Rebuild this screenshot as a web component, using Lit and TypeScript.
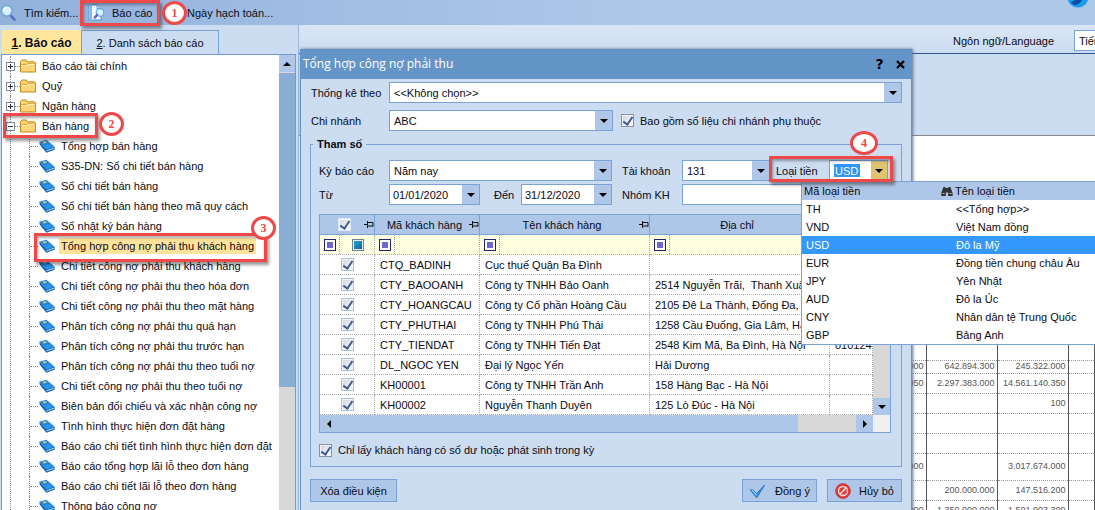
import { LitElement, html, css, svg, nothing } from "lit";
import { customElement, state } from "lit/decorators.js";
import { classMap } from "lit/directives/class-map.js";

const REPORTS = [
  "Tổng hợp bán hàng",
  "S35-DN: Sổ chi tiết bán hàng",
  "Sổ chi tiết bán hàng",
  "Sổ chi tiết bán hàng theo mã quy cách",
  "Sổ nhật ký bán hàng",
  "Tổng hợp công nợ phải thu khách hàng",
  "Chi tiết công nợ phải thu khách hàng",
  "Chi tiết công nợ phải thu theo hóa đơn",
  "Chi tiết công nợ phải thu theo mặt hàng",
  "Phân tích công nợ phải thu quá hạn",
  "Phân tích công nợ phải thu trước hạn",
  "Phân tích công nợ phải thu theo tuổi nợ",
  "Chi tiết công nợ phải thu theo tuổi nợ",
  "Biên bản đối chiếu và xác nhận công nợ",
  "Tình hình thực hiện đơn đặt hàng",
  "Báo cáo chi tiết tình hình thực hiện đơn đặt",
  "Báo cáo tổng hợp lãi lỗ theo đơn hàng",
  "Báo cáo chi tiết lãi lỗ theo đơn hàng",
  "Thông báo công nợ",
];

const CUSTOMERS = [
  ["CTQ_BADINH", "Cục thuế Quận Ba Đình", "", ""],
  ["CTY_BAOOANH", "Công ty TNHH Bảo Oanh", "2514 Nguyễn Trãi,  Thanh Xuân, Hà Nội", ""],
  ["CTY_HOANGCAU", "Công ty Cổ phần Hoàng Cầu", "2105 Đê La Thành, Đống Đa, Hà Nội", ""],
  ["CTY_PHUTHAI", "Công ty TNHH Phú Thái", "1258 Cầu Đuống, Gia Lâm, Hà Nội", ""],
  ["CTY_TIENDAT", "Công ty TNHH Tiến Đạt", "2548 Kim Mã, Ba Đình, Hà Nội", "0101243150"],
  ["DL_NGOC YEN", "Đại lý Ngọc Yến", "Hải Dương", ""],
  ["KH00001", "Công ty TNHH Trần Anh", "158 Hàng Bạc - Hà Nội", ""],
  ["KH00002", "Nguyễn Thanh Duyên", "125 Lò Đúc - Hà Nội", ""],
];

const CURRENCIES = [
  ["TH", "<<Tổng hợp>>"],
  ["VND", "Việt Nam đồng"],
  ["USD", "Đô la Mỹ"],
  ["EUR", "Đồng tiền chung châu Âu"],
  ["JPY", "Yên Nhật"],
  ["AUD", "Đô la Úc"],
  ["CNY", "Nhân dân tệ Trung Quốc"],
  ["GBP", "Bảng Anh"],
];

const FIGURES = [
  { size: "tall", cells: ["", "200.000.000", "247.730.000"] },
  { size: "short", cells: ["000", "642.894.300", "245.322.000"] },
  { size: "mid", cells: ["950", "2.297.383.000", "14.561.140.350"] },
  { size: "mid", cells: ["", "", "100"] },
  { size: "mid", cells: ["", "", ""] },
  { size: "mid", cells: ["", "", ""] },
  { size: "high", cells: ["000", "", "3.017.674.000"] },
  { size: "mid", cells: ["", "200.000.000", "147.516.200"] },
  { size: "mid", cells: ["000", "1.350.000.000", "1.501.903.309"] },
];

const searchIcon = svg`<svg width="18" height="18" viewBox="0 0 18 18" aria-hidden="true">
  <path d="M10.8 11.8l3.8 3.8" stroke="#5a6fc4" stroke-width="2.6" stroke-linecap="round"/>
  <circle cx="6.8" cy="6.8" r="5.3" fill="#d8f0ff" stroke="#62a5de" stroke-width="1.4"/>
  <path d="M3.8 6.5a3 3 0 0 1 3-3" stroke="#fff" stroke-width="1.4" fill="none"/>
</svg>`;

const reportIcon = svg`<svg width="18" height="17" viewBox="0 0 18 17" aria-hidden="true">
  <path d="M1 1h8l4 4v11H1z" fill="#f4f9ff" stroke="#4d97cf"/>
  <path d="M2 2h2v13H2z" fill="#7fbbe6"/>
  <path d="M9 1v4h4" fill="#bfe0f5" stroke="#4d97cf" stroke-width=".8"/>
  <circle cx="12" cy="8.4" r="3.8" fill="#d6f1fc" stroke="#5aa6d8" stroke-width="1.1"/>
  <path d="M9.2 10.8L6.8 13.6" stroke="#6b62b8" stroke-width="2.4" stroke-linecap="round"/>
</svg>`;

const globeIcon = svg`<svg width="22" height="22" viewBox="0 0 22 22" aria-hidden="true">
  <circle cx="11" cy="11" r="10.5" fill="#1b9bee"/>
  <path d="M4 17c3-4 8-4 12-6-1 5-4 8-9 8z" fill="#0b4fa8"/>
</svg>`;

const folderIcon = svg`<svg width="16" height="14" viewBox="0 0 16 14" aria-hidden="true">
  <path d="M.5 13V2.4L1.8 1h4.4l1.2 1.8h6.8l1.3.9V13z" fill="#fdd477" stroke="#c28a1c"/>
  <path d="M1.4 5.6h5.4l1-1.2h7" fill="none" stroke="#d99f32"/>
  <path d="M1.4 6.6h5.8l1-1.2h6.4" fill="none" stroke="#fff0b8"/>
</svg>`;

const bookIcon = svg`<svg width="16" height="14" viewBox="0 0 16 14" aria-hidden="true">
  <path d="M0.3 2.8L7.2 .8l4.6 3.8-7.4 2.8z" fill="#1f86dc"/>
  <path d="M0.3 2.8l4.1 4.6 1 2.2-1.2.4L.8 5.6z" fill="#0d559f"/>
  <path d="M3.4 3l3-.9 1.6 1.4-3.1 1z" fill="#e8c46a"/>
  <path d="M4.4 7.4l7.4-2.8 3.9 3.5v2.6l-8.3 3L3.8 9.4z" fill="#1669b8"/>
  <path d="M4.4 7l7.4-2.6 3.6 3.3-8 2.9z" fill="#2b93e8"/>
  <path d="M7.6 11.8l7.4-2.6" stroke="#d4ebfb" stroke-width=".9"/>
</svg>`;

const pinIcon = svg`<svg class="pin" width="10" height="9" viewBox="0 0 10 9" aria-hidden="true">
  <path d="M0 4.5h3.5M3.5 1v7M3.5 2.5H9v4M3.5 6H9" stroke="#111" fill="none"/>
</svg>`;

const binoculars = svg`<svg width="12" height="11" viewBox="0 0 12 11" aria-hidden="true">
  <path d="M2.4 1h2v1h3V1h2l2.2 6v3H7.2V6.6H4.8V10H.3V7z" fill="#333"/>
  <path d="M1.5 7.5h2M8.5 7.5h2" stroke="#bbb"/>
</svg>`;

const tickIcon = svg`<svg width="18" height="16" viewBox="0 0 18 16" aria-hidden="true">
  <path d="M1 6.8l3.2.2 3.2 3.8L15.6 2 7.8 14.8z" fill="#3d98e8" stroke="#1565b8" stroke-width=".8"/>
  <path d="M2.6 7.6l1.4.1 3.6 4.6" stroke="#b4dcff" fill="none"/>
</svg>`;

const banIcon = svg`<svg width="16" height="16" viewBox="0 0 16 16" aria-hidden="true">
  <circle cx="8" cy="8" r="7.4" fill="#e33a3a" stroke="#b81f22" stroke-width=".6"/>
  <circle cx="8" cy="8" r="4.5" fill="none" stroke="#fbe3e3" stroke-width="1.3"/>
  <path d="M5 11l6-6" stroke="#fbe3e3" stroke-width="1.5"/>
</svg>`;

const arrow = (dir: "down" | "up" | "left" | "right") => html`<i class=${"arrow " + dir}></i>`;

@customElement("app-root")
export class AppRoot extends LitElement {
  @state() private report = 5;
  @state() private currency = "USD";

  static styles = css`
    :host {
      display: flex;
      flex-direction: column;
      position: relative;
      height: 100vh;
      overflow: hidden;
      background: #ccdcf1;
      color: #0b0b14;
      font: 11px/14px "Liberation Sans", Arial, sans-serif;
    }
    * { box-sizing: border-box; }
    button, input, select { font: inherit; color: inherit; border-radius: 0; margin: 0; }
    button { padding: 0; border: 0; background: none; }
    svg { display: block; flex: none; }
    .arrow { display: block; width: 0; height: 0; border: 4px solid transparent; }
    .arrow.down { border-top-color: #000; border-bottom-width: 0; }
    .arrow.up { border-bottom-color: #000; border-top-width: 0; }
    .arrow.left { border-right-color: #000; border-left-width: 0; }
    .arrow.right { border-left-color: #000; border-right-width: 0; }

    .toolbar {
      display: flex;
      align-items: center;
      flex: none;
      height: 25px;
      position: relative;
      background: linear-gradient(90deg, #92b2dc, #aec8e9 60%);
    }
    .toolbar button { display: flex; align-items: center; height: 25px; }
    .tool-search { width: 80px; gap: 6px; }
    .tool-report { width: 80px; gap: 6px; }
    .toolbar .tool-report { padding-left: 8px; }
    .tool-date { margin-left: 27px; }
    .globe { position: absolute; right: 6px; top: -14px; }

    .workspace { display: flex; flex: 1; min-height: 0; }
    .side {
      display: flex;
      flex-direction: column;
      flex: none;
      width: 299px;
      padding: 5px 2px 0 1px;
      border-right: 1px solid #9db8dc;
      background: #ccdcf1;
    }
    .tabs { display: flex; flex: none; height: 24px; padding-left: 1px; }
    .tab { border: 1px solid #7aa2d4; border-bottom: 0; background: #ccdcf1; }
    .tab.on { width: 79px; background: #ffe69c; border-color: #ffe69c; font-weight: bold; font-size: 12px; }
    .tab.off { width: 138px; }
    .tree-box {
      display: flex;
      flex: 1;
      min-height: 0;
      background: #fff;
      border: 1px solid #6f9bd1;
      border-bottom: 0;
    }
    .tree { flex: 1; overflow: hidden; padding: 1px 0 0 4px; margin: 0; list-style: none; }
    .tree ul { margin: 0; padding: 0 0 0 14px; list-style: none; }
    .node { display: flex; align-items: center; height: 20px; white-space: nowrap; }
    .group { margin-left: 4px; border-left: 1px dotted #888; }
    .group .node { margin-left: -5px; }
    .group ul .node { margin-left: 4px; border-left: 1px dotted #888; }
    .expander {
      display: flex;
      flex: none;
      width: 9px;
      height: 9px;
      border: 1px solid #7c8ba1;
      background: linear-gradient(90deg, #333, #333) center / 5px 1px no-repeat, #fff;
    }
    .expander.plus {
      background: linear-gradient(#333, #333) center / 5px 1px no-repeat,
        linear-gradient(#333, #333) center / 1px 5px no-repeat, #fff;
    }
    .dots { width: 5px; border-top: 1px dotted #888; flex: none; }
    .dots.long { width: 8px; margin-right: 1px; }
    .node a { color: inherit; text-decoration: none; padding: 0 2px; }
    .node a.cat { margin-left: 4px; }
    .node a.leaf { margin-left: 4px; }
    .node a.current { background: #ffe39a; line-height: 16px; }

    .vscroll { display: flex; flex-direction: column; flex: none; width: 17px; background: #d8d8d8; }
    .vscroll button, .hscroll button {
      display: flex;
      align-items: center;
      justify-content: center;
      flex: none;
      width: 17px;
      height: 17px;
      background: #aec7e8;
    }
    .side .vscroll { width: 16px; }
    .side .vscroll button { width: 16px; }
    .side .thumb { height: 69%; background: #8aadd6; margin-top: 1px; }

    .preview { flex: 1; min-width: 0; display: flex; flex-direction: column; background: #fff; }
    .language {
      display: flex;
      align-items: center;
      justify-content: flex-end;
      flex: none;
      height: 29px;
      padding-top: 3px;
      gap: 20px;
      background: linear-gradient(#dae6f6, #ccdcf1);
      border-bottom: 1px solid #2c538c;
      overflow: hidden;
    }
    .language select {
      appearance: none;
      width: 90px;
      height: 21px;
      margin-right: -69px;
      padding: 0 4px;
      background: #fff;
      border: 1px solid #7aa2d4;
      flex: none;
    }
    .band { flex: none; height: 82px; background: #ccdcf1; border-bottom: 1px solid #888; }
    .page { flex: 1; overflow: hidden; padding-top: 180px; display: flex; justify-content: flex-end; }
    .figures { border-collapse: collapse; table-layout: fixed; width: 240px; height: 0; flex: none; }
    .figures td {
      padding: 0 2px;
      border-right: 1px solid #555;
      border-bottom: 1px dotted #999;
      text-align: right;
      color: #555;
      font-size: 9px;
      line-height: 11px;
    }
    .figures .c-a { width: 71px; }
    .figures .tall td { height: 44px; }
    .figures .short td { height: 13px; }
    .figures .mid td { height: 20px; }
    .figures .high td { height: 27px; }

    .dialog {
      position: absolute;
      left: 300px;
      top: 49px;
      width: 612px;
      min-height: calc(100% - 49px);
      background: #ccdcf1;
      border: 1px solid #6495c8;
      border-width: 0 1px;
      box-shadow: 1px 0 3px #5d7391;
    }
    .title {
      display: flex;
      align-items: center;
      height: 30px;
      padding: 0 0 0 2px;
      background: #6495c8;
      color: #fff;
      font-family: "Open Sans", "Noto Sans", sans-serif;
    }
    .title h1 { flex: 1; margin: 0; font-size: 12px; font-weight: normal; }
    .title button { width: 21px; height: 20px; color: #000; font: bold 14px/16px "DejaVu Sans", sans-serif; }
    .title button svg { margin: 0 auto; }
    .form { padding: 3px 9px 9px; }
    .line { display: flex; align-items: center; height: 21px; margin-bottom: 7px; white-space: nowrap; }
    .caption { width: 79px; flex: none; padding-left: 1px; }
    .inner { width: 70px; flex: none; }
    .field {
      display: flex;
      flex: none;
      position: relative;
      height: 21px;
      background: #fff;
      border: 1px solid #7aa2d4;
    }
    .field select, .field input {
      appearance: none;
      flex: 1;
      min-width: 0;
      padding: 0 4px;
      border: 0;
      background: transparent;
      outline: none;
    }
    .field input { padding: 0 3px; }
    .drop {
      display: flex;
      align-items: center;
      justify-content: center;
      flex: none;
      width: 17px;
      background: #aec7e8;
    }
    .wide { flex: 1; }
    .branch { width: 224px; }
    .period { width: 223px; }
    .date { width: 91px; }
    .account { width: 88px; }
    .code { width: 59px; padding-left: 4px; }
    .group-kh { width: 206px; }
    .field .code-input { flex: none; width: 26px; margin: 3px auto 3px 0; padding: 0 1px; background: #3395f5; color: #fff; }
    .code .drop { background: #dfc470; width: 16px; }
    .l-account { width: 70px; padding-left: 10px; flex: none; }
    .l-currency { width: 59px; padding-left: 6px; flex: none; }
    .l-to { width: 41px; padding-left: 14px; flex: none; }

    .tick {
      appearance: none;
      position: relative;
      flex: none;
      width: 13px;
      height: 13px;
      border: 1px solid #8793a8;
      background: linear-gradient(135deg, #cfd5de, #fff);
      box-shadow: inset 0 0 0 1px #f2f4f8;
    }
    .tick:checked::after {
      content: "";
      position: absolute;
      left: 3px;
      top: 0;
      width: 4px;
      height: 8px;
      border: solid #3c5c96;
      border-width: 0 2px 2px 0;
      transform: rotate(35deg);
    }
    .soft { border-color: #a9c0e0; }
    .check { display: flex; align-items: center; gap: 6px; }
    .with-branch { margin-left: 8px; }

    fieldset { min-width: 0; margin: -1px 0 0; padding: 9px 10px 9px 8px; border: 1px solid #7aa2d4; }
    legend { margin-left: -6px; padding: 0 4px; height: 14px; font-weight: bold; }
    fieldset .line { margin-bottom: 3px; }
    .grid { margin-top: 9px; margin-bottom: 10px; border: 1px solid #7aa2d4; background: #fff; }
    .grid-main { display: flex; }
    .customers { flex: 1; min-width: 0; width: 0; table-layout: fixed; border-collapse: separate; border-spacing: 0; }
    .customers th, .customers td {
      height: 20px;
      padding: 0 0 0 5px;
      border-right: 1px dotted #aaa;
      border-bottom: 1px dotted #aaa;
      white-space: pre;
      overflow: hidden;
      font-weight: normal;
    }
    .customers th { background: #aec7e8; border-right: 1px solid #7aa2d4; border-bottom: 1px solid #7aa2d4; }
    .customers .filter td { background: #ffffe1; padding-left: 4px; }
    .head { display: flex; align-items: center; }
    .head span { flex: 1; text-align: center; }
    .head .tick { margin: 0 auto; border-color: #dfe8f4; }
    .customers .cell-check { padding: 0; }
    .customers .cell-check .tick { display: block; margin: 0 auto; }
    .slot { display: flex; align-items: center; height: 19px; }
    .op { width: 12px; height: 12px; border: 1px solid #23236b; background: #6a67d0; box-shadow: inset 0 0 0 2px #fff; }
    .slot .op { margin-right: 3px; }
    .bar { width: 1px; height: 19px; border-left: 1px dotted #999; }
    .mixed { width: 12px; height: 12px; margin-left: 12px; border: 1px solid #6e8699; background: linear-gradient(135deg, #25b1d8, #16568f); box-shadow: inset 0 0 0 1px #e8eef3; }
    .c-1 { width: 55px; }
    .c-2 { width: 105px; }
    .c-3 { width: 170px; }
    .c-4 { width: 180px; }
    .grid .vscroll { justify-content: flex-end; }
    .hscroll { display: flex; height: 17px; background: #d8d8d8; }
    .hscroll .run { flex: 1; background: #aec7e8; }
    .hscroll .rest { width: 58px; }
    .corner { width: 17px; background: #f0f0f0; }

    .actions { display: flex; align-items: center; gap: 10px; margin-top: 12px; }
    .actions button {
      display: flex;
      align-items: center;
      justify-content: center;
      height: 23px;
      width: 75px;
      border: 1px solid #7aa2d4;
      background: #aec7e8;
      gap: 8px;
    }
    .actions .reset { width: 87px; margin-right: auto; }

    .popup {
      position: absolute;
      left: -29px;
      top: 20px;
      z-index: 2;
      width: 320px;
      background: #fff;
      border: 1px solid #7aa2d4;
      table-layout: fixed;
      border-spacing: 0;
    }
    .popup th, .popup td { height: 18px; padding: 0 0 0 4px; text-align: left; font-weight: normal; white-space: nowrap; }
    .popup th { background: #aec7e8; padding-left: 2px; }
    .popup .p-code { width: 137px; }
    .popup td + td { padding-left: 17px; }
    .popup .picked td { background: #3397fd; color: #fff; }
    .named { display: flex; align-items: center; gap: 2px; }

    .frame, .mark { position: absolute; z-index: 3; border: 3px solid #ee4849; pointer-events: none; }
    .frame { box-shadow: 2px 3px 3px #0006, inset 1px 2px 3px #0005; }
    .mark {
      width: 25px;
      height: 24px;
      border-radius: 50%;
      background: #fff;
      color: #ee4849;
      text-align: center;
      font: bold 12px/18px "Liberation Serif", serif;
    }
    .f1 { left: 80px; top: 0; width: 80px; height: 26px; }
    .m1 { left: 162px; top: 1px; }
    .f2 { left: 3px; top: 113px; width: 95px; height: 25px; }
    .m2 { left: 99px; top: 112px; }
    .f3 { left: 34px; top: 233px; width: 233px; height: 29px; }
    .m3 { left: 251px; top: 216px; }
    .f4 { left: 769px; top: 156px; width: 124px; height: 26px; }
    .m4 { left: 850px; top: 131px; width: 28px; }
  `;

  private tree() {
    return html`
      <ul class="tree">
        ${["Báo cáo tài chính", "Quỹ", "Ngân hàng"].map(
          (name) => html`<li class="group"><div class="node">
            <span class="expander plus"></span><span class="dots"></span>${folderIcon}<a class="cat" href="#">${name}</a>
          </div></li>`
        )}
        <li class="group">
          <div class="node">
            <span class="expander"></span><span class="dots"></span>${folderIcon}<a class="cat" href="#">Bán hàng</a>
          </div>
          <ul>
            ${REPORTS.map(
              (name, i) => html`<li class="node"><span class="dots long"></span>${bookIcon}<a
                  href="#"
                  class=${classMap({ leaf: true, current: i === this.report })}
                  @click=${(e: Event) => { e.preventDefault(); this.report = i; }}
                >${name}</a></li>`
            )}
          </ul>
        </li>
      </ul>`;
  }

  private currencyField() {
    return html`<div class="field code">
      <input class="code-input" id="currency" .value=${this.currency} />
      <button class="drop" aria-label="Loại tiền">${arrow("down")}</button>
      <table class="popup">
        <colgroup><col class="p-code" /><col /></colgroup>
        <thead><tr><th>Mã loại tiền</th><th><div class="named">${binoculars}Tên loại tiền</div></th></tr></thead>
        <tbody>
          ${CURRENCIES.map(
            ([code, name]) => html`<tr
              class=${classMap({ picked: code === this.currency })}
              @click=${() => (this.currency = code)}
            ><td>${code}</td><td>${name}</td></tr>`
          )}
        </tbody>
      </table>
    </div>`;
  }

  private customers() {
    const head = (name: string) => html`<th><div class="head"><span>${name}</span>${pinIcon}</div></th>`;
    const slot = html`<td><div class="slot"><i class="op"></i><i class="bar"></i></div></td>`;
    return html`<div class="grid">
      <div class="grid-main">
        <table class="customers">
          <colgroup><col class="c-1" /><col class="c-2" /><col class="c-3" /><col class="c-4" /><col /></colgroup>
          <thead><tr>
            <th><div class="head"><input class="tick" type="checkbox" aria-label="Chọn tất cả" checked />${pinIcon}</div></th>
            ${head("Mã khách hàng")}${head("Tên khách hàng")}${head("Địa chỉ")}<th></th>
          </tr></thead>
          <tbody>
            <tr class="filter">
              <td><div class="slot"><i class="op"></i><i class="bar"></i><i class="mixed"></i></div></td>
              ${slot}${slot}${slot}<td></td>
            </tr>
            ${CUSTOMERS.map(
              (row) => html`<tr>
                <td class="cell-check"><input class="tick soft" type="checkbox" aria-label=${row[0]} checked /></td>
                ${row.map((cell) => html`<td>${cell || nothing}</td>`)}
              </tr>`
            )}
          </tbody>
        </table>
        <div class="vscroll"><button aria-label="Xuống">${arrow("down")}</button></div>
      </div>
      <div class="hscroll">
        <button aria-label="Trái">${arrow("left")}</button><div class="run"></div><div class="rest"></div>
        <button aria-label="Phải">${arrow("right")}</button><div class="corner"></div>
      </div>
    </div>`;
  }

  private dialog() {
    return html`<section class="dialog" role="dialog" aria-labelledby="dialog-title">
      <header class="title">
        <h1 id="dialog-title">Tổng hợp công nợ phải thu</h1>
        <button aria-label="Trợ giúp">?</button>
        <button aria-label="Đóng">
          <svg width="9" height="9" viewBox="0 0 9 9"><path d="M1 1l7 7M8 1L1 8" stroke="#000" stroke-width="2.2" /></svg>
        </button>
      </header>
      <div class="form">
        <div class="line">
          <label class="caption" for="by">Thống kê theo</label>
          <div class="field wide"><select id="by"><option>&lt;&lt;Không chọn&gt;&gt;</option></select><span class="drop">${arrow("down")}</span></div>
        </div>
        <div class="line">
          <label class="caption" for="branch">Chi nhánh</label>
          <div class="field branch"><select id="branch"><option>ABC</option></select><span class="drop">${arrow("down")}</span></div>
          <label class="check with-branch"><input class="tick" type="checkbox" checked />Bao gồm số liệu chi nhánh phụ thuộc</label>
        </div>
        <fieldset>
          <legend>Tham số</legend>
          <div class="line">
            <label class="inner" for="period">Kỳ báo cáo</label>
            <div class="field period"><select id="period"><option>Năm nay</option></select><span class="drop">${arrow("down")}</span></div>
            <label class="l-account" for="account">Tài khoản</label>
            <div class="field account"><select id="account"><option>131</option></select><span class="drop">${arrow("down")}</span></div>
            <label class="l-currency" for="currency">Loại tiền</label>
            ${this.currencyField()}
          </div>
          <div class="line">
            <label class="inner" for="from">Từ</label>
            <div class="field date"><input id="from" value="01/01/2020" /><button class="drop" aria-label="Chọn ngày">${arrow("down")}</button></div>
            <label class="l-to" for="to">Đến</label>
            <div class="field date"><input id="to" value="31/12/2020" /><button class="drop" aria-label="Chọn ngày">${arrow("down")}</button></div>
            <label class="l-account" for="customer-group">Nhóm KH</label>
            <div class="field group-kh"><input id="customer-group" /></div>
          </div>
          ${this.customers()}
          <label class="check"><input class="tick" type="checkbox" checked />Chỉ lấy khách hàng có số dư hoặc phát sinh trong kỳ</label>
        </fieldset>
        <div class="actions">
          <button class="reset">Xóa điều kiện</button>
          <button>${tickIcon}Đồng ý</button>
          <button>${banIcon}Hủy bỏ</button>
        </div>
      </div>
    </section>`;
  }

  render() {
    return html`
      <nav class="toolbar">
        <button class="tool-search">${searchIcon}Tìm kiếm...</button>
        <button class="tool-report">${reportIcon}Báo cáo</button>
        <button class="tool-date">Ngày hạch toán...</button>
        <span class="globe">${globeIcon}</span>
      </nav>
      <main class="workspace">
        <aside class="side">
          <div class="tabs">
            <button class="tab on"><u>1</u>. Báo cáo</button>
            <button class="tab off"><u>2</u>. Danh sách báo cáo</button>
          </div>
          <div class="tree-box">
            ${this.tree()}
            <div class="vscroll"><button aria-label="Lên">${arrow("up")}</button><div class="thumb"></div></div>
          </div>
        </aside>
        <section class="preview">
          <div class="language">
            <label for="language">Ngôn ngữ/Language</label>
            <select id="language"><option>Tiếng Việt</option></select>
          </div>
          <div class="band"></div>
          <div class="page">
            <table class="figures">
              <colgroup><col class="c-a" /><col class="c-a" /><col class="c-a" /><col /></colgroup>
              <tbody>
                ${FIGURES.map(
                  (row) => html`<tr class=${row.size}>${row.cells.map((c) => html`<td>${c}</td>`)}<td></td></tr>`
                )}
              </tbody>
            </table>
          </div>
        </section>
      </main>
      ${this.dialog()}
      <div class="frame f1"></div><div class="mark m1">1</div>
      <div class="frame f2"></div><div class="mark m2">2</div>
      <div class="frame f3"></div><div class="mark m3">3</div>
      <div class="frame f4"></div><div class="mark m4">4</div>
    `;
  }
}
